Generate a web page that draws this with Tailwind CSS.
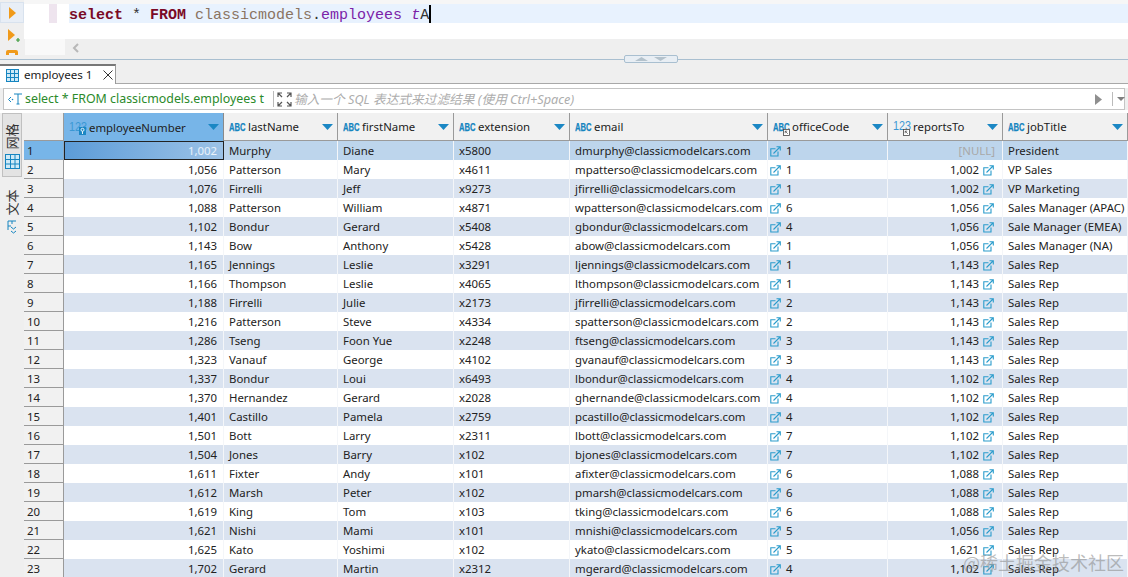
<!DOCTYPE html>
<html lang="en">
<head>
<meta charset="UTF-8">
<title>employees 1</title>
<script src="https://cdn.jsdelivr.net/npm/@tailwindcss/browser@4"></script>
</head>
<body class="bg-[#efefef] overflow-hidden">
<div class="relative w-[1128px] h-[577px] overflow-hidden font-['Noto_Sans','Noto_Sans_CJK_SC',sans-serif] text-[11.4px] text-[#222]">

  <!-- sql editor -->
  <div class="flex h-[60px] border-b border-[#a9bfd0]">
    <div class="w-[24px] h-[55px] shrink-0 flex flex-col items-center overflow-hidden bg-[#efefef]">
      <div class="mt-[2px] w-[24px] h-[21px] shrink-0 bg-[#e8eef6] border border-[#d8e2ee] flex items-center justify-center">
        <svg width="7" height="12" viewBox="0 0 7 12"><path d="M0 0L7 6L0 12Z" fill="#f09a1a"/></svg>
      </div>
      <svg class="mt-[6px] ml-[3px] shrink-0" width="12" height="14" viewBox="0 0 12 14"><path d="M0 0L7 6L0 12Z" fill="#f09a1a"/><path d="M8 11h4M10 9v4" stroke="#3a9a3a" stroke-width="1.2"/></svg>
      <div class="mt-[7px] w-[12px] h-[10px] shrink-0 rounded-[2px] border-[3px] border-[#f09a1a]"></div>
    </div>
    <div class="flex-1 flex flex-col relative">
      <div class="h-[39px] bg-white">
        <div class="h-[4px] bg-[#f6f6f6]"></div>
        <div class="ml-[45px] h-[19px] bg-[#e8f2fe] pt-[5px] flex items-center font-['Liberation_Mono',monospace] text-[15px] whitespace-pre">
          <span class="font-bold text-[#7a0a26]">select</span><span class="text-[#333]"> * </span><span class="font-bold text-[#7a0a26]">FROM</span><span class="text-[#8a7462]"> classicmodels</span><span class="text-[#333]">.</span><span class="text-[#7b22a8]">employees</span><span class="text-[#333]"> </span><span class="text-[#7b22a8] italic">t</span><span class="text-[#333]">A</span><span class="w-[2px] h-[18px] -mt-[5px] bg-black"></span>
        </div>
      </div>
      <div class="absolute left-[25px] top-[4px] w-[8px] h-[19px] bg-[#eee4ee]"></div>
      <div class="absolute left-[1px] top-[39px] w-[40px] h-[16px] bg-[#f9f9f9]"></div>
      <div class="flex-1 pl-[48px] pt-[4px]">
        <svg width="8" height="10" viewBox="0 0 8 10"><path d="M6 1L2 5L6 9" fill="none" stroke="#b8b8b8" stroke-width="2"/></svg>
      </div>
    </div>
  </div>
  <div class="absolute left-[624px] top-[55px] w-[54px] h-[8px] rounded-[2px] border border-[#a9bfd0] bg-[#e8eef4] flex items-center justify-center gap-[6px]">
    <svg width="13" height="4" viewBox="0 0 13 4"><path d="M0 4L6.5 0L13 4Z" fill="#b4c2cc"/></svg>
    <svg width="13" height="4" viewBox="0 0 13 4"><path d="M0 0L6.5 4L13 0Z" fill="#b4c2cc"/></svg>
  </div>

  <!-- tab strip -->
  <div class="h-[4px]"></div>
  <div class="h-[20px] flex border-b border-[#a8a8a8] relative">
    <div class="w-[116px] h-[20px] bg-white border-r border-[#9a9a9a] border-t-2 border-t-[#777] flex items-center pl-[6px] gap-[5px]">
      <svg width="13" height="13" viewBox="0 0 13 13"><rect x="0.5" y="0.5" width="12" height="12" fill="#cfeaf7" stroke="#1685c0"/><path d="M0 4.5h13M0 8.5h13M4.5 0v13M8.5 0v13" stroke="#1685c0"/></svg>
      <span class="text-[11.6px] leading-none whitespace-nowrap">employees 1</span>
      <svg class="ml-[6px]" width="10" height="10" viewBox="0 0 10 10"><path d="M0.5 0.5L9.5 9.5M9.5 0.5L0.5 9.5" stroke="#333"/></svg>
    </div>
  </div>

  <!-- filter bar -->
  <div class="h-[4px] bg-white"></div>
  <div class="mx-[3px] h-[22px] bg-white border border-[#c4c4c4] flex items-center relative text-[12.4px]">
    <svg class="ml-[3px] mr-[2px]" width="16" height="14" viewBox="0 0 16 14"><path d="M4 5L1.5 7.5L4 10" fill="none" stroke="#1685c0"/><circle cx="5.5" cy="7.5" r="0.8" fill="#1685c0"/><path d="M7 2h8M11 2v10M9.5 12h3" fill="none" stroke="#1685c0"/></svg>
    <span class="w-[245px] text-[#2a8a2a] whitespace-nowrap overflow-hidden leading-[16px]">select * FROM classicmodels.employees t</span>
    <span class="ml-[3px] w-px h-[16px] bg-[#bbb]"></span>
    <svg class="ml-[3px]" width="15" height="15" viewBox="0 0 15 15"><g fill="none" stroke="#555" stroke-width="1.2"><path d="M1 5V1H5M1 1L5 5M14 5V1H10M14 1L10 5M1 10V14H5M1 14L5 10M14 10V14H10M14 14L10 10"/></g></svg>
    <span class="ml-[2px] italic text-[#adadad] whitespace-nowrap text-[12.7px] leading-[16px]">输入一个 SQL 表达式来过滤结果 (使用 Ctrl+Space)</span>
    <svg class="absolute left-[1091px] top-[5px]" width="7" height="11" viewBox="0 0 7 11"><path d="M0 0L7 5.5L0 11Z" fill="#8f8f8f"/></svg>
    <span class="absolute left-[1108px] top-[3px] w-px h-[14px] bg-[#bbb]"></span>
    <svg class="absolute left-[1113px] top-[8px]" width="8" height="4" viewBox="0 0 8 4"><path d="M0 0H8L4 4Z" fill="#7f7f7f"/></svg>
  </div>
  <div class="h-[3px] bg-white"></div>

  <!-- results -->
  <div class="flex h-[464px] overflow-hidden">
    <!-- side tabs -->
    <div class="w-[24px] shrink-0 bg-[#efefef] relative">
      <div class="absolute left-[2px] top-0 w-[20px] h-[64px] bg-[#e3e3e3] border border-[#c0c0c0] flex flex-col items-center pt-[7px] gap-[3px]">
        <div class="h-[30px] flex items-center justify-center"><span class="-rotate-90 whitespace-nowrap leading-none text-[13px] text-[#333]">网格</span></div>
        <svg width="15" height="15" viewBox="0 0 15 15"><rect x="0.5" y="0.5" width="14" height="14" fill="#cfeaf7" stroke="#1685c0"/><path d="M0 5.5h15M0 10h15M5.5 0v15M10 0v15" stroke="#1685c0"/></svg>
      </div>
      <div class="absolute left-[2px] top-[74px] w-[20px] flex flex-col items-center gap-[3px]">
        <div class="h-[30px] flex items-center justify-center"><span class="-rotate-90 whitespace-nowrap leading-none text-[13px] text-[#333]">文本</span></div>
        <svg width="10" height="14" viewBox="0 0 10 14"><path d="M1 1V10M1 1H9M1 6H4M5 1V4" fill="none" stroke="#1685c0"/><path d="M4 7L6.5 9L9 7M4 11L6.5 13L9 11" fill="none" stroke="#1685c0"/></svg>
      </div>
    </div>
    <div id="grid" class="flex-1 min-w-0"></div>
  </div>

  <!-- watermark -->
  <div class="absolute left-[963px] top-[550px] text-[18px] leading-[24px] text-[#8f8f8f]/60 whitespace-nowrap font-['Noto_Sans_CJK_SC',sans-serif]">@稀土掘金技术社区</div>
</div>

<script>
const rows = [
  [1002,'Murphy','Diane','x5800','dmurphy',1,null,'President'],
  [1056,'Patterson','Mary','x4611','mpatterso',1,1002,'VP Sales'],
  [1076,'Firrelli','Jeff','x9273','jfirrelli',1,1002,'VP Marketing'],
  [1088,'Patterson','William','x4871','wpatterson',6,1056,'Sales Manager (APAC)'],
  [1102,'Bondur','Gerard','x5408','gbondur',4,1056,'Sale Manager (EMEA)'],
  [1143,'Bow','Anthony','x5428','abow',1,1056,'Sales Manager (NA)'],
  [1165,'Jennings','Leslie','x3291','ljennings',1,1143,'Sales Rep'],
  [1166,'Thompson','Leslie','x4065','lthompson',1,1143,'Sales Rep'],
  [1188,'Firrelli','Julie','x2173','jfirrelli',2,1143,'Sales Rep'],
  [1216,'Patterson','Steve','x4334','spatterson',2,1143,'Sales Rep'],
  [1286,'Tseng','Foon Yue','x2248','ftseng',3,1143,'Sales Rep'],
  [1323,'Vanauf','George','x4102','gvanauf',3,1143,'Sales Rep'],
  [1337,'Bondur','Loui','x6493','lbondur',4,1102,'Sales Rep'],
  [1370,'Hernandez','Gerard','x2028','ghernande',4,1102,'Sales Rep'],
  [1401,'Castillo','Pamela','x2759','pcastillo',4,1102,'Sales Rep'],
  [1501,'Bott','Larry','x2311','lbott',7,1102,'Sales Rep'],
  [1504,'Jones','Barry','x102','bjones',7,1102,'Sales Rep'],
  [1611,'Fixter','Andy','x101','afixter',6,1088,'Sales Rep'],
  [1612,'Marsh','Peter','x102','pmarsh',6,1088,'Sales Rep'],
  [1619,'King','Tom','x103','tking',6,1088,'Sales Rep'],
  [1621,'Nishi','Mami','x101','mnishi',5,1056,'Sales Rep'],
  [1625,'Kato','Yoshimi','x102','ykato',5,1621,'Sales Rep'],
  [1702,'Gerard','Martin','x2312','mgerard',4,1102,'Sales Rep'],
];

const gridCols = 'grid grid-cols-[40px_160px_114px_116px_116px_198px_120px_115px_125px]';

const abc = '<svg width="17" height="12" viewBox="0 0 17 12" class="shrink-0"><text x="0" y="10" font-family="Liberation Sans" font-size="10.5" font-weight="700" fill="#1685c0" stroke="#1685c0" stroke-width=".25" textLength="16.5" lengthAdjust="spacingAndGlyphs">ABC</text></svg>';
const num = '<svg width="18" height="14" viewBox="0 0 18 14" class="shrink-0"><text x="0" y="9.5" font-family="Liberation Sans" font-size="12" fill="#3a98d4" textLength="18" lengthAdjust="spacingAndGlyphs">123</text></svg>';
const key = '<svg class="absolute top-[16px] left-[15px]" width="7" height="7" viewBox="0 0 7 7"><rect width="7" height="7" fill="#ffffff"/><rect x="0.5" y="0.5" width="6" height="6" fill="none" stroke="#444" stroke-width=".8"/><path d="M2.2 2.2L4.8 4.8M2.2 4.2V2.2H4.2" fill="none" stroke="#444" stroke-width=".7"/></svg>';
const pk = '<svg class="absolute left-[15px] top-[14px]" width="7" height="8" viewBox="0 0 7 8"><rect width="7" height="8" fill="#1b87c4"/><circle cx="3.5" cy="2.8" r="1.5" fill="none" stroke="#fff" stroke-width=".9"/><path d="M3.5 4.3v2.7" stroke="#fff" stroke-width=".9"/></svg>';
const sort = '<svg class="absolute right-[4px] top-[11px]" width="11" height="6" viewBox="0 0 11 6"><path d="M0 0H11L5.5 6Z" fill="#1b87c4"/></svg>';
const link = '<svg width="11" height="11" viewBox="0 0 11 11" class="shrink-0"><path d="M8 5.5V10H0.8V2.8H5.5" fill="none" stroke="#2a9ccc" stroke-width="1.1"/><path d="M3.5 7.5L10 1M6.5 0.7H10.3V4.5" fill="none" stroke="#2a9ccc" stroke-width="1.1"/></svg>';

function head(label, icon, extra, active) {
  const cls = active
    ? 'relative h-[28px] flex items-center pl-[5px] pt-px gap-[2px] bg-[#77b5e8] border-r border-[#8a8a8a]'
    : 'relative h-[28px] flex items-center pl-[5px] pt-px gap-[2px] bg-[#f1f1f1] border-r border-[#9a9a9a] border-b border-b-[#9a9a9a]';
  return `<div class="${cls}">${icon}<span>${label}</span>${extra}${sort}</div>`;
}

let html = `<div class="${gridCols}">`;
html += '<div class="h-[28px] bg-[#efefef] border-r border-[#9a9a9a] border-b border-b-[#9a9a9a]"></div>';
html += head('employeeNumber', num, pk, true);
html += head('lastName', abc, '');
html += head('firstName', abc, '');
html += head('extension', abc, '');
html += head('email', abc, '');
html += head('officeCode', abc, key);
html += head('reportsTo', num, key);
html += head('jobTitle', abc, '');
html += '</div>';

rows.forEach((r, i) => {
  const first = i === 0;
  const bg = first ? 'bg-[#bdd5ec]' : (i % 2 === 0 ? 'bg-[#dae3f0]' : 'bg-white');
  const td = 'h-[19px] pt-px flex items-center whitespace-nowrap overflow-hidden border-r border-[#f4f6f9] ' + bg;
  html += `<div class="${gridCols} leading-none">`;
  html += `<div class="h-[19px] pt-px flex items-center pl-[3px] border-r border-b ${first ? 'bg-[#77b5e8] border-[#8aa8c4]' : 'bg-[#f1f1f1] border-[#9a9a9a]'}">${i + 1}</div>`;
  html += first
    ? `<div class="h-[19px] flex items-center justify-end pr-[6px] text-white/80 bg-gradient-to-r from-[#5c9cd8] to-[#9cc2e6] border border-[#222]">1,002</div>`
    : `<div class="${td} justify-end pr-[6px]">${r[0].toLocaleString('en-US')}</div>`;
  html += `<div class="${td} pl-[5px]">${r[1]}</div>`;
  html += `<div class="${td} pl-[5px]">${r[2]}</div>`;
  html += `<div class="${td} pl-[5px]">${r[3]}</div>`;
  html += `<div class="${td} pl-[5px]">${r[4]}@classicmodelcars.com</div>`;
  html += `<div class="${td} pl-[2px] gap-[5px]">${link}<span>${r[5]}</span></div>`;
  html += r[6] === null
    ? `<div class="${td} justify-end pr-[7px] text-[#a8a8a8]">[NULL]</div>`
    : `<div class="${td} justify-end pr-[8px] gap-[4px]"><span>${r[6].toLocaleString('en-US')}</span>${link}</div>`;
  html += `<div class="${td} pl-[5px]">${r[7]}</div>`;
  html += '</div>';
});
document.getElementById('grid').innerHTML = html;
</script>
</body>
</html>
